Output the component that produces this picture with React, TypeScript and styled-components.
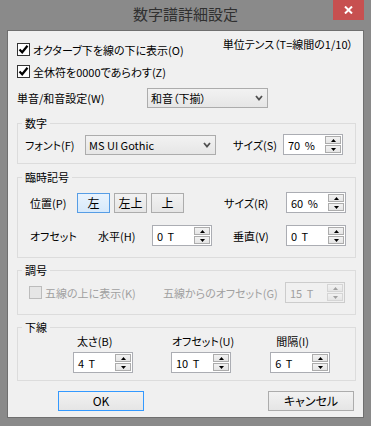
import React from "react";
import styled, { createGlobalStyle } from "styled-components";

const GlobalStyle = createGlobalStyle`
  html, body { margin: 0; padding: 0; background: #8a8a8a; }
  body {
    font-family: "Noto Sans CJK JP", "Noto Sans", sans-serif;
    font-size: 11px;
    line-height: 14px;
    color: #000;
    font-feature-settings: "palt";
  }
  * { box-sizing: border-box; }
`;

const Window = styled.div`
  width: 371px;
  height: 426px;
  background: #8a8a8a;
  display: flex;
  flex-direction: column;
  padding: 0 7px 8px 7px;
`;

const TitleBar = styled.div`
  height: 30px;
  display: grid;
  grid-template-columns: 1fr auto 1fr;
  align-items: start;
  margin: 0 -7px;
`;

const Title = styled.div`
  font-size: 15px;
  line-height: 18px;
  margin-top: 5px;
  color: #303030;
  font-feature-settings: normal;
`;

const CloseCell = styled.div`
  display: flex;
  justify-content: flex-end;
  padding-right: 7px;
`;

const CloseButton = styled.div`
  width: 31px;
  height: 20px;
  background: #c75050;
  display: flex;
  align-items: center;
  justify-content: center;
`;

const Client = styled.div`
  flex: 1;
  background: #f0f0f0;
  border: 1px solid #6f6f6f;
  display: flex;
  flex-direction: column;
  padding: 0 7px 0 9px;
`;

const TopArea = styled.div`
  display: flex;
  justify-content: space-between;
  align-items: flex-start;
`;

const CheckColumn = styled.div`
  display: flex;
  flex-direction: column;
  gap: 9px;
  margin-top: 12px;
`;

const CheckRow = styled.label<{ $disabled?: boolean }>`
  display: flex;
  align-items: center;
  height: 13px;
  gap: 3px;
  white-space: nowrap;
  color: ${(p) => (p.$disabled ? "#a0a0a0" : "#000")};
`;

const Box = styled.span<{ $disabled?: boolean }>`
  width: 13px;
  height: 13px;
  flex: none;
  border: 1px solid ${(p) => (p.$disabled ? "#bcbcbc" : "#333333")};
  background: ${(p) => (p.$disabled ? "#e6e6e6" : "#ffffff")};
  display: flex;
  align-items: center;
  justify-content: center;
`;

const UnitNote = styled.div`
  margin-top: 6px;
  margin-right: 3px;
  white-space: nowrap;
`;

const Row = styled.div<{ $mt?: number; $pl?: number }>`
  display: flex;
  align-items: center;
  margin-top: ${(p) => p.$mt ?? 0}px;
  padding-left: ${(p) => p.$pl ?? 0}px;
`;

const Cell = styled.span<{ $w: number; $ml?: number; $disabled?: boolean }>`
  width: ${(p) => p.$w}px;
  flex: none;
  margin-left: ${(p) => p.$ml ?? 0}px;
  white-space: nowrap;
  color: ${(p) => (p.$disabled ? "#a0a0a0" : "#000")};
`;

const Select = styled.div<{ $w: number }>`
  width: ${(p) => p.$w}px;
  height: 20px;
  flex: none;
  border: 1px solid #acacac;
  background: linear-gradient(#f2f2f2, #e6e6e6);
  display: flex;
  align-items: center;
  justify-content: space-between;
  padding: 0 4px 0 3px;
  white-space: nowrap;
`;

const Group = styled.fieldset<{ $mt: number; $pt: number; $pb: number }>`
  margin: ${(p) => p.$mt}px 0 0 0;
  padding: ${(p) => p.$pt}px 0 ${(p) => p.$pb}px 0;
  border: 1px solid #dcdcdc;
  min-width: 0;
`;

const Legend = styled.legend`
  margin-left: 4px;
  padding: 0 3px;
  line-height: 14px;
`;

const SpinBox = styled.div<{ $disabled?: boolean; $ml?: number }>`
  width: 60px;
  height: 21px;
  flex: none;
  margin-left: ${(p) => p.$ml ?? 0}px;
  border: 1px solid ${(p) => (p.$disabled ? "#cccccc" : "#abadb3")};
  background: ${(p) => (p.$disabled ? "#f0f0f0" : "#ffffff")};
  display: flex;
  align-items: center;
  padding: 1px 1px 1px 4px;
  color: ${(p) => (p.$disabled ? "#a0a0a0" : "#000")};
`;

const SpinValue = styled.span`
  flex: 1;
  white-space: nowrap;
  font-feature-settings: normal;
  word-spacing: 2px;
`;

const SpinButtons = styled.div`
  display: flex;
  flex-direction: column;
  gap: 1px;
`;

const SpinButton = styled.div<{ $disabled?: boolean }>`
  width: 16px;
  height: 8px;
  border: 1px solid ${(p) => (p.$disabled ? "#d5d5d5" : "#acacac")};
  background: linear-gradient(#f2f2f2, #e5e5e5);
  display: flex;
  align-items: center;
  justify-content: center;
`;

const PushButton = styled.div<{ $w: number; $h?: number; $active?: boolean; $default?: boolean }>`
  width: ${(p) => p.$w}px;
  height: ${(p) => p.$h ?? 20}px;
  flex: none;
  border: 1px solid
    ${(p) => (p.$active ? "#569de5" : p.$default ? "#3399ff" : "#acacac")};
  background: ${(p) =>
    p.$active ? "linear-gradient(#e9f3fd, #d6e9fb)" : "linear-gradient(#f2f2f2, #e5e5e5)"};
  display: flex;
  align-items: center;
  justify-content: center;
  white-space: nowrap;
  font-size: 12px;
`;

const ButtonGroup = styled.div`
  display: flex;
  gap: 4px;
  flex: none;
`;

const Column = styled.div<{ $ml: number; $labelOffset: number }>`
  display: flex;
  flex-direction: column;
  gap: 4px;
  margin-left: ${(p) => p.$ml}px;
  & > span {
    padding-left: ${(p) => p.$labelOffset}px;
    white-space: nowrap;
  }
`;

const FooterRow = styled.div`
  display: flex;
  gap: 124px;
  padding-left: 41px;
  margin-top: 10px;
`;

const Check = () => (
  <svg width="11" height="11" viewBox="0 0 11 11">
    <path d="M1.5 5.5 L4.2 8.3 L9.5 1.8" fill="none" stroke="#000" strokeWidth="2.2" />
  </svg>
);

const Chevron = () => (
  <svg width="8" height="6" viewBox="0 0 8 6">
    <path d="M1 1 L4 4.5 L7 1" fill="none" stroke="#505050" strokeWidth="1.8" />
  </svg>
);

const Tri = ({ up, disabled }: { up?: boolean; disabled?: boolean }) => (
  <svg width="5" height="3" viewBox="0 0 5 3">
    <path
      d={up ? "M0 3 L2.5 0 L5 3 Z" : "M0 0 L2.5 3 L5 0 Z"}
      fill={disabled ? "#a0a0a0" : "#000"}
    />
  </svg>
);

const Spinner = ({ value, disabled, ml }: { value: string; disabled?: boolean; ml?: number }) => (
  <SpinBox $disabled={disabled} $ml={ml}>
    <SpinValue>{value}</SpinValue>
    <SpinButtons>
      <SpinButton $disabled={disabled}>
        <Tri up disabled={disabled} />
      </SpinButton>
      <SpinButton $disabled={disabled}>
        <Tri disabled={disabled} />
      </SpinButton>
    </SpinButtons>
  </SpinBox>
);

export default function App() {
  return (
    <>
      <GlobalStyle />
      <Window>
        <TitleBar>
          <div />
          <Title>数字譜詳細設定</Title>
          <CloseCell>
            <CloseButton>
              <svg width="9" height="8" viewBox="0 0 9 8">
                <path d="M1 0.5 L8 7.5 M8 0.5 L1 7.5" stroke="#fff" strokeWidth="2" />
              </svg>
            </CloseButton>
          </CloseCell>
        </TitleBar>
        <Client>
          <TopArea>
            <CheckColumn>
              <CheckRow>
                <Box>
                  <Check />
                </Box>
                オクターブ下を線の下に表示(O)
              </CheckRow>
              <CheckRow>
                <Box>
                  <Check />
                </Box>
                全休符を0000であらわす(Z)
              </CheckRow>
            </CheckColumn>
            <UnitNote>単位テンス（T=線間の1/10）</UnitNote>
          </TopArea>

          <Row $mt={10}>
            <Cell $w={130}>単音/和音設定(W)</Cell>
            <Select $w={121}>
              <span>和音（下揃）</span>
              <Chevron />
            </Select>
          </Row>

          <Group $mt={8} $pt={4} $pb={8}>
            <Legend>数字</Legend>
            <Row $pl={7}>
              <Cell $w={60}>フォント(F)</Cell>
              <Select $w={131}>
                <span style={{ fontFeatureSettings: "normal" }}>MS UI Gothic</span>
                <Chevron />
              </Select>
              <Cell $w={50} $ml={17}>
                サイズ(S)
              </Cell>
              <Spinner value="70 %" />
            </Row>
          </Group>

          <Group $mt={6} $pt={8} $pb={11}>
            <Legend>臨時記号</Legend>
            <Row $pl={12}>
              <Cell $w={47}>位置(P)</Cell>
              <ButtonGroup>
                <PushButton $w={33} $active>
                  左
                </PushButton>
                <PushButton $w={33}>左上</PushButton>
                <PushButton $w={33}>上</PushButton>
              </ButtonGroup>
              <Cell $w={62} $ml={40}>
                サイズ(R)
              </Cell>
              <Spinner value="60 %" />
            </Row>
            <Row $pl={12} $mt={12}>
              <Cell $w={68}>オフセット</Cell>
              <Cell $w={54}>水平(H)</Cell>
              <Spinner value="0 T" />
              <Cell $w={53} $ml={21}>
                垂直(V)
              </Cell>
              <Spinner value="0 T" />
            </Row>
          </Group>

          <Group $mt={5} $pt={5} $pb={11}>
            <Legend>調号</Legend>
            <Row $pl={11}>
              <CheckRow $disabled>
                <Box $disabled />
                <Cell $w={118} $disabled>
                  五線の上に表示(K)
                </Cell>
              </CheckRow>
              <Cell $w={122} $disabled>
                五線からのオフセット(G)
              </Cell>
              <Spinner value="15 T" disabled />
            </Row>
          </Group>

          <Group $mt={5} $pt={0} $pb={7}>
            <Legend>下線</Legend>
            <Row>
              <Column $ml={55} $labelOffset={4}>
                <span>太さ(B)</span>
                <Spinner value="4 T" />
              </Column>
              <Column $ml={38} $labelOffset={1}>
                <span>オフセット(U)</span>
                <Spinner value="10 T" />
              </Column>
              <Column $ml={36} $labelOffset={6}>
                <span>間隔(I)</span>
                <Spinner value="6 T" />
              </Column>
            </Row>
          </Group>

          <FooterRow>
            <PushButton $w={86} $default>
              OK
            </PushButton>
            <PushButton $w={86}>キャンセル</PushButton>
          </FooterRow>
        </Client>
      </Window>
    </>
  );
}
